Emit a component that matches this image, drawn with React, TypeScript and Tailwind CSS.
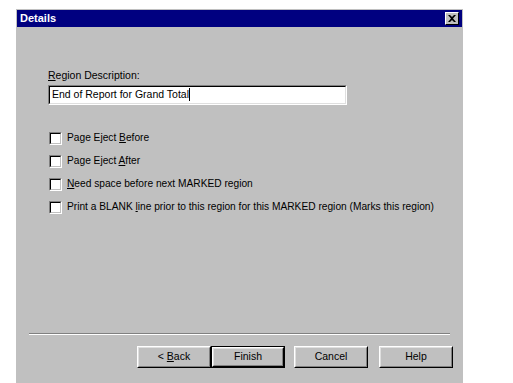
import React from 'react';

const font = { fontFamily: '"Liberation Sans", Arial, sans-serif' };

const Check = ({ label, under, rest }: { label: string; under: string; rest: string }) => (
  <div className="flex items-center h-[12px]">
    <div className="w-[13px] h-[13px] bg-white border border-t-[#808080] border-l-[#808080] border-r-white border-b-white">
      <div className="w-full h-full border border-t-black border-l-black border-r-[#c0c0c0] border-b-[#c0c0c0]" />
    </div>
    <span className="ml-[5px] text-[10.2px] text-black whitespace-nowrap leading-none">
      {label}
      <u>{under}</u>
      {rest}
    </span>
  </div>
);

const Button = ({ children, primary }: { children: React.ReactNode; primary?: boolean }) => (
  <div className={primary ? 'border border-black' : ''}>
    <div
      className={
        'flex items-center justify-center bg-[#c0c0c0] text-[10.5px] text-black border border-t-white border-l-white border-r-black border-b-black ' +
        (primary ? 'w-[72px] h-[20px]' : 'w-[74px] h-[22px]')
      }
    >
      <div className="w-full h-full flex items-center justify-center border border-t-[#dfdfdf] border-l-[#dfdfdf] border-r-[#808080] border-b-[#808080]">
        <span className="whitespace-pre">{children}</span>
      </div>
    </div>
  </div>
);

export default function App() {
  return (
    <div className="w-[513px] h-[383px] bg-white pl-[16px] pt-[9px] overflow-hidden" style={font}>
      <div className="w-[447px] h-[374px] bg-[#c0c0c0] flex flex-col p-[1px]">
        {/* title bar */}
        <div className="h-[17px] bg-[#000080] flex items-center justify-between pl-[3px] pr-[3px]">
          <span className="text-white font-bold text-[11px] leading-none">Details</span>
          <div className="w-[14px] h-[13px] bg-[#c0c0c0] border border-t-white border-l-white border-r-black border-b-black flex items-center justify-center">
            <svg width="8" height="7" viewBox="0 0 8 7">
              <path d="M0 0h2l2 2 2-2h2L5 3.5 8 7H6L4 5 2 7H0l3-3.5z" fill="black" />
            </svg>
          </div>
        </div>

        {/* body */}
        <div className="flex flex-col pl-[31px] pt-[43px]">
          <span className="text-[10.5px] text-black leading-none">
            <u>R</u>egion Description:
          </span>
          <div className="mt-[4px] w-[299px] h-[20px] bg-white border border-t-[#808080] border-l-[#808080] border-r-white border-b-white">
            <div className="w-full h-full border border-t-black border-l-black border-r-[#dfdfdf] border-b-[#dfdfdf] flex items-center pl-[2px]">
              <span className="text-[10.5px] text-black leading-none">End of Report for Grand Total</span>
              <span className="w-[1px] h-[13px] bg-black" />
            </div>
          </div>

          <div className="flex flex-col gap-[11px] mt-[28px] pl-[1px]">
            <Check label="Page Eject " under="B" rest="efore" />
            <Check label="Page Eject " under="A" rest="fter" />
            <Check label="" under="N" rest="eed space before next MARKED region" />
            <Check label="Print a BLANK " under="l" rest="ine prior to this region for this MARKED region (Marks this region)" />
          </div>
        </div>

        <div className="flex-1" />

        {/* separator */}
        <div className="mx-[12px] border-t border-t-[#808080] border-b border-b-white" />

        <div className="flex items-center justify-end pr-[9px] pt-[11px] pb-[14px]">
          <Button>
            {'< '}
            <u>B</u>ack
          </Button>
          <Button primary>Finish</Button>
          <div className="w-[9px]" />
          <Button>Cancel</Button>
          <div className="w-[11px]" />
          <Button>Help</Button>
        </div>
      </div>
    </div>
  );
}
